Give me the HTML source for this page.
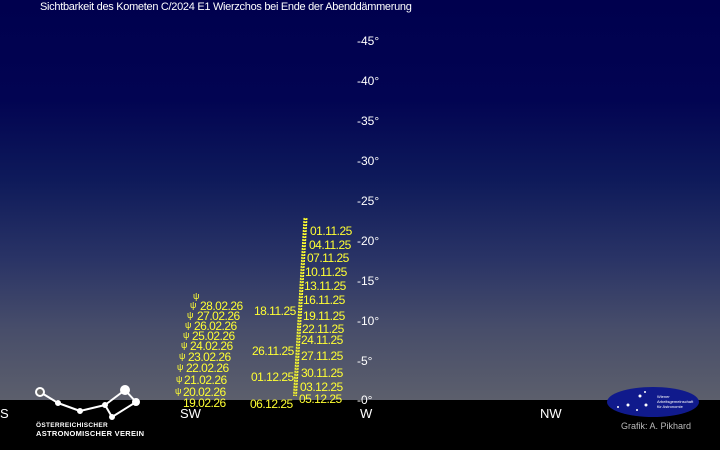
<!DOCTYPE html><html><head><meta charset="utf-8"><style>
body{margin:0}
#c{position:relative;width:720px;height:450px;overflow:hidden;font-family:"Liberation Sans",sans-serif;background:#000;
}
#sky{position:absolute;left:0;top:0;width:720px;height:400px;background:linear-gradient(#00004e 0%,#020452 25%,#0e1a5a 45%,#2a3466 65%,#474d6a 82%,#5c5f6c 100%)}
.t{position:absolute;font-size:12px;line-height:12px;white-space:nowrap;letter-spacing:-0.5px}
.y{color:#ffff33}
.w{color:#fff}
.a{color:#fff;font-size:12px;letter-spacing:0}
.d{color:#fff;font-size:13px;letter-spacing:0}
.s{position:absolute;color:#ffff33;font-size:9px;line-height:9px}
</style></head><body><div id="c"><div id="sky"></div>
<div class="t w" style="left:40px;top:1px;font-size:11px;letter-spacing:-0.3px">Sichtbarkeit des Kometen C/2024 E1 Wierzchos bei Ende der Abenddämmerung</div>
<div class="t a" style="left:357px;top:35px">-45°</div>
<div class="t a" style="left:357px;top:75px">-40°</div>
<div class="t a" style="left:357px;top:115px">-35°</div>
<div class="t a" style="left:357px;top:155px">-30°</div>
<div class="t a" style="left:357px;top:195px">-25°</div>
<div class="t a" style="left:357px;top:235px">-20°</div>
<div class="t a" style="left:357px;top:275px">-15°</div>
<div class="t a" style="left:357px;top:315px">-10°</div>
<div class="t a" style="left:357px;top:355px">-5°</div>
<div class="t a" style="left:357px;top:394px">-0°</div>
<svg style="position:absolute;left:0;top:0" width="720" height="450">
<line x1="305.5" y1="218" x2="295" y2="396" stroke="#ffff33" stroke-width="4" stroke-dasharray="2 1"/>
<line x1="305.5" y1="218" x2="295" y2="396" stroke="#9a9a30" stroke-width="1.5" stroke-dasharray="1 2"/>
<g stroke="#fff" stroke-width="2" fill="#fff">
<line x1="40" y1="392" x2="58" y2="403"/><line x1="58" y1="403" x2="80" y2="411"/><line x1="80" y1="411" x2="105" y2="405"/><line x1="105" y1="405" x2="125" y2="390"/><line x1="125" y1="390" x2="136" y2="402"/><line x1="136" y1="402" x2="112" y2="417"/><line x1="112" y1="417" x2="105" y2="405"/>
<circle cx="58" cy="403" r="2"/><circle cx="80" cy="411" r="2"/><circle cx="105" cy="405" r="2"/><circle cx="125" cy="390" r="4"/><circle cx="136" cy="402" r="3"/><circle cx="112" cy="417" r="2"/>
<circle cx="40" cy="392" r="4" fill="#666"/></g>
<ellipse cx="653" cy="402" rx="46" ry="15" fill="#101a8c"/>
<g fill="#fff"><circle cx="640" cy="396" r="1.5"/><circle cx="628" cy="405" r="1.5"/><circle cx="646" cy="405" r="1.5"/><circle cx="618" cy="407" r="1"/><circle cx="637" cy="410" r="1"/><circle cx="645" cy="392" r="1"/></g>
</svg>
<div class="t w" style="left:657px;top:394px;font-size:4px;line-height:5px;letter-spacing:0">Wiener<br>Arbeitsgemeinschaft<br>für Astronomie</div>
<div class="t" style="left:621px;top:420px;color:#bbb;font-size:9px;letter-spacing:0">Grafik: A. Pikhard</div>
<div class="t w" style="left:36px;top:420px;font-size:6.5px;font-weight:bold;letter-spacing:.3px">ÖSTERREICHISCHER</div>
<div class="t w" style="left:36px;top:428px;font-size:7.5px;font-weight:bold;letter-spacing:.3px">ASTRONOMISCHER VEREIN</div>
<div class="t d" style="left:0px;top:408px">S</div>
<div class="t d" style="left:180px;top:408px">SW</div>
<div class="t d" style="left:360px;top:408px">W</div>
<div class="t d" style="left:540px;top:408px">NW</div>
<div class="t y" style="left:310px;top:225px">01.11.25</div>
<div class="t y" style="left:309px;top:239px">04.11.25</div>
<div class="t y" style="left:307px;top:252px">07.11.25</div>
<div class="t y" style="left:305px;top:266px">10.11.25</div>
<div class="t y" style="left:304px;top:280px">13.11.25</div>
<div class="t y" style="left:303px;top:294px">16.11.25</div>
<div class="t y" style="left:303px;top:310px">19.11.25</div>
<div class="t y" style="left:302px;top:323px">22.11.25</div>
<div class="t y" style="left:301px;top:334px">24.11.25</div>
<div class="t y" style="left:301px;top:350px">27.11.25</div>
<div class="t y" style="left:301px;top:367px">30.11.25</div>
<div class="t y" style="left:300px;top:381px">03.12.25</div>
<div class="t y" style="left:299px;top:393px">05.12.25</div>
<div class="t y" style="left:254px;top:305px">18.11.25</div>
<div class="t y" style="left:252px;top:345px">26.11.25</div>
<div class="t y" style="left:251px;top:371px">01.12.25</div>
<div class="t y" style="left:250px;top:398px">06.12.25</div>
<div class="t y" style="left:200px;top:300px">28.02.26</div>
<div class="t y" style="left:197px;top:310px">27.02.26</div>
<div class="t y" style="left:194px;top:320px">26.02.26</div>
<div class="t y" style="left:192px;top:330px">25.02.26</div>
<div class="t y" style="left:190px;top:340px">24.02.26</div>
<div class="t y" style="left:188px;top:351px">23.02.26</div>
<div class="t y" style="left:186px;top:362px">22.02.26</div>
<div class="t y" style="left:184px;top:374px">21.02.26</div>
<div class="t y" style="left:183px;top:386px">20.02.26</div>
<div class="t y" style="left:183px;top:397px">19.02.26</div>
<div class="s" style="left:193px;top:292px">ψ</div>
<div class="s" style="left:190px;top:301px">ψ</div>
<div class="s" style="left:187px;top:311px">ψ</div>
<div class="s" style="left:185px;top:321px">ψ</div>
<div class="s" style="left:183px;top:331px">ψ</div>
<div class="s" style="left:181px;top:341px">ψ</div>
<div class="s" style="left:179px;top:352px">ψ</div>
<div class="s" style="left:177px;top:363px">ψ</div>
<div class="s" style="left:176px;top:375px">ψ</div>
<div class="s" style="left:175px;top:387px">ψ</div>
</div></body></html>
